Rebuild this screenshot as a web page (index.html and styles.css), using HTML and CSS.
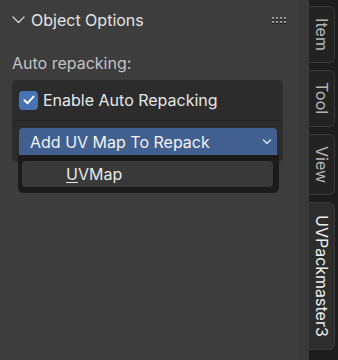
FILE: index.html
```html
<!DOCTYPE html>
<html>
<head>
<meta charset="utf-8">
<link rel="stylesheet" href="styles.css">
</head>
<body>
<div class="app">
  <div class="main">
    <div class="panel-header">
      <svg class="chev" width="13" height="13" viewBox="0 0 13 13"><path d="M1 4 L6.5 9.5 L12 4" fill="none" stroke="#cfcfcf" stroke-width="1.4" stroke-linecap="round" stroke-linejoin="round"/></svg>
      <span class="panel-title">Object Options</span>
      <div class="grip">
        <i></i><i></i><i></i><i></i><i></i><i></i><i></i><i></i>
      </div>
    </div>
    <div class="label">Auto repacking:</div>
    <div class="box">
      <div class="check-row">
        <span class="checkbox">
          <svg width="14" height="14" viewBox="0 0 14 14"><path d="M2.5 7.2 L5.6 10.2 L11.5 3.6" fill="none" stroke="#ffffff" stroke-width="2" stroke-linecap="round" stroke-linejoin="round"/></svg>
        </span>
        <span class="check-label">Enable Auto Repacking</span>
      </div>
      <div class="sep"></div>
      <div class="dropdown-wrap">
        <div class="dropdown">
          <span>Add UV Map To Repack</span>
          <svg width="10" height="10" viewBox="0 0 10 10"><path d="M1.5 3 L5 6.5 L8.5 3" fill="none" stroke="#dfe6f0" stroke-width="1.3" stroke-linecap="round" stroke-linejoin="round"/></svg>
        </div>
        <div class="menu">
          <div class="menu-item"><u>U</u>VMap</div>
        </div>
      </div>
    </div>
  </div>
  <div class="tabs">
    <div class="tab">Item</div>
    <div class="tab">Tool</div>
    <div class="tab">View</div>
    <div class="tab active">UVPackmaster3</div>
  </div>
</div>
</body>
</html>
```
FILE: styles.css
```css
html, body {
  margin: 0;
  padding: 0;
  background: #1d1d1d;
}
body {
  font-family: Inter, "Noto Sans", "DejaVu Sans", sans-serif;
  font-size: 15px;
  width: 338px;
  height: 360px;
  overflow: hidden;
}
.app {
  display: flex;
  height: 360px;
}
.main {
  width: 309px;
  background: linear-gradient(to right, #3d3d3d 297px, #3a3a3a 297px);
  box-sizing: border-box;
  padding-left: 12px;
}
.panel-header {
  height: 40px;
  display: flex;
  align-items: center;
  padding-right: 23px;
}
.chev {
  flex: none;
  margin-top: -1px;
}
.panel-title {
  margin-left: 6px;
  color: #e4e4e4;
  font-size: 16px;
  flex: 1;
}
.grip {
  display: grid;
  grid-template-columns: repeat(4, 2px);
  grid-auto-rows: 2px;
  column-gap: 2px;
  row-gap: 2px;
  margin-top: -1px;
}
.grip i {
  display: block;
  width: 2px;
  height: 2px;
  background: #9a9a9a;
  box-shadow: 0 1px 0 #151515;
}
.label {
  color: #c2c2c2;
  font-size: 16px;
  height: 40px;
  line-height: 20px;
  padding-top: 13px;
  box-sizing: border-box;
}
.box {
  width: 271px;
  height: 82px;
  background: #2c2c2c;
  border-radius: 5px;
  box-sizing: border-box;
}
.check-row {
  display: flex;
  align-items: center;
  height: 40px;
  padding-left: 7px;
  box-sizing: border-box;
}
.checkbox {
  width: 19px;
  height: 19px;
  border-radius: 4px;
  background: #4772b3;
  display: flex;
  align-items: center;
  justify-content: center;
  flex: none;
}
.check-label {
  margin-left: 5px;
  color: #e8e8e8;
  font-size: 16px;
}
.sep {
  height: 1px;
  background: #232323;
}
.dropdown-wrap {
  position: relative;
  margin: 7px 6px 0 7px;
}
.dropdown {
  height: 27px;
  background: #41608f;
  border-radius: 4px 4px 0 0;
  display: flex;
  align-items: center;
  justify-content: space-between;
  padding: 0 5px 0 11px;
  color: #f2f2f2;
  font-size: 16px;
}
.menu {
  position: absolute;
  left: -1px;
  right: -2px;
  top: 27px;
  height: 38px;
  background: #1b1b1b;
  border-radius: 0 0 5px 5px;
  padding: 6px 6px 0 4px;
  box-sizing: border-box;
}
.menu-item {
  height: 26px;
  background: #393939;
  border-radius: 4px;
  color: #e8e8e8;
  font-size: 16px;
  line-height: 26px;
  padding-left: 44px;
}
.menu-item u {
  text-underline-offset: 2px;
}
.tabs {
  flex: 1;
  display: flex;
  flex-direction: column;
  gap: 7px;
  padding-top: 6px;
  padding-right: 3px;
}
.tab {
  writing-mode: vertical-rl;
  background: #232323;
  border: 1px solid #3a3a3a;
  border-left: none;
  border-radius: 0 6px 6px 0;
  color: #b4b4b4;
  font-size: 16px;
  padding: 11px 0;
  min-height: 57px;
  box-sizing: border-box;
  display: flex;
  align-items: center;
  justify-content: center;
  line-height: 25px;
}
.tab.active {
  background: #2d2d2d;
  color: #ececec;
  padding: 12px 0;
}
```
